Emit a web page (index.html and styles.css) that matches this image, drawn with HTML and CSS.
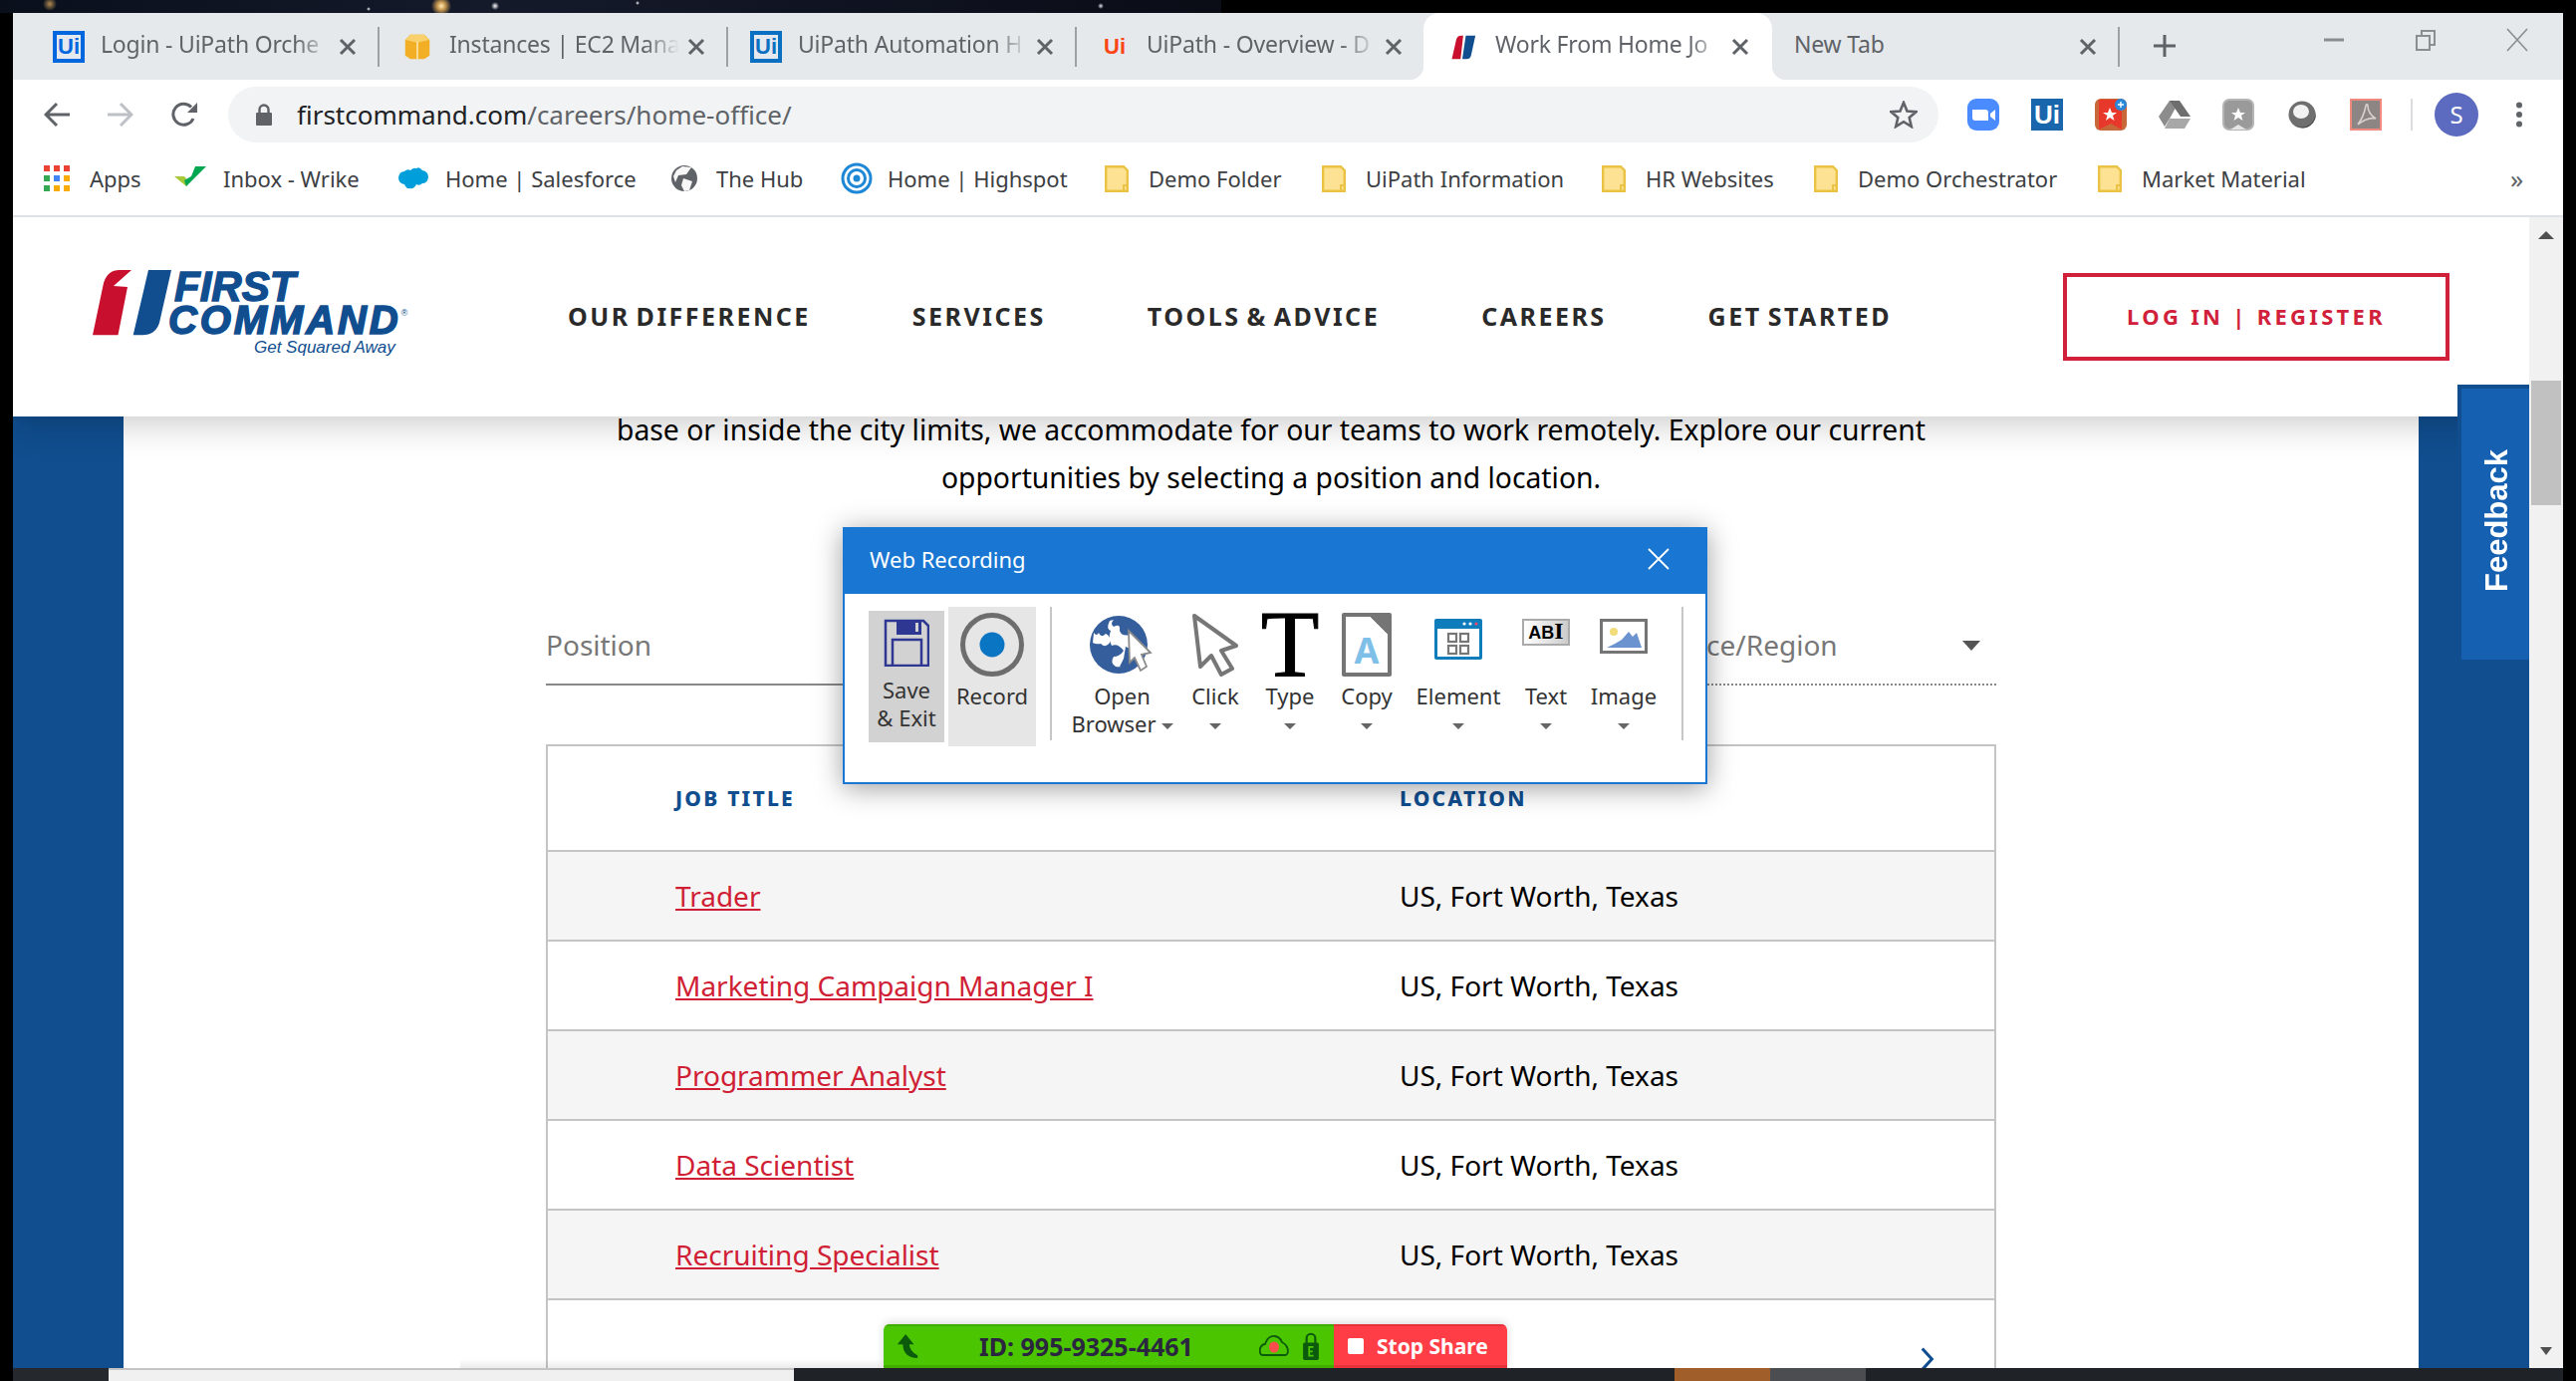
FILE: index.html
```html
<!DOCTYPE html>
<html lang="en">
<head>
    <meta charset="UTF-8">
    <title>Work From Home Jobs | First Command</title>
    <link rel="stylesheet" href="styles.css">
</head>
<body>
<div class="wallpaper"></div>
<div class="window">

    <!-- Tab strip -->
    <div class="tabstrip">
        <div class="tab">
            <span class="fav-ui">Ui</span>
            <span class="tab-title">Login - UiPath Orche</span>
            <svg class="tab-x" viewBox="0 0 18 18"><path d="M2 2 16 16M16 2 2 16"/></svg>
        </div>
        <div class="tab-sep"></div>
        <div class="tab">
            <svg class="fav" viewBox="0 0 32 32"><path fill="#f2ae25" d="M2 8 8 2H24L30 8V26L24 30H8L2 26Z"/><path fill="#f8d06c" d="M8 2H24L30 8 16 11 2 8Z"/><path fill="#fbe3a5" d="M15 10H17V30H15Z"/></svg>
            <span class="tab-title">Instances | EC2 Mana</span>
            <svg class="tab-x" viewBox="0 0 18 18"><path d="M2 2 16 16M16 2 2 16"/></svg>
        </div>
        <div class="tab-sep"></div>
        <div class="tab">
            <span class="fav-ui fav-ui-dark">Ui</span>
            <span class="tab-title">UiPath Automation H</span>
            <svg class="tab-x" viewBox="0 0 18 18"><path d="M2 2 16 16M16 2 2 16"/></svg>
        </div>
        <div class="tab-sep"></div>
        <div class="tab">
            <span class="fav-ui-red">Ui</span>
            <span class="tab-title">UiPath - Overview - D</span>
            <svg class="tab-x" viewBox="0 0 18 18"><path d="M2 2 16 16M16 2 2 16"/></svg>
        </div>
        <div class="tab tab-active">
            <svg class="fav fav-fc" viewBox="0 0 32 32"><path fill="#c8102e" d="M4 30 9 8Q10 3 15 3H17L14 30Z"/><path fill="#104e8f" d="M20 3H31L26 26Q25 30 21 30H16Z"/></svg>
            <span class="tab-title">Work From Home Jo</span>
            <svg class="tab-x" viewBox="0 0 18 18"><path d="M2 2 16 16M16 2 2 16"/></svg>
        </div>
        <div class="tab tab-new">
            <span class="tab-title tab-title-full">New Tab</span>
            <svg class="tab-x" viewBox="0 0 18 18"><path d="M2 2 16 16M16 2 2 16"/></svg>
        </div>
        <div class="tab-sep"></div>
        <svg class="tab-plus" viewBox="0 0 24 24"><path d="M12 1V23M1 12H23"/></svg>
        <div class="win-controls">
            <svg viewBox="0 0 24 24"><path stroke="#8a8d91" stroke-width="3" d="M2 12H22"/></svg>
            <svg viewBox="0 0 24 24"><path fill="none" stroke="#8a8d91" stroke-width="2" d="M3 8H16V22H3ZM8 8V3H21V17H16"/></svg>
            <svg viewBox="0 0 24 24"><path stroke="#8a8d91" stroke-width="1.6" d="M2 1 22 23M22 1 2 23"/></svg>
        </div>
    </div>

    <!-- Address bar -->
    <div class="toolbar">
        <svg class="nav-btn" viewBox="0 0 26 26"><path fill="none" stroke="#5f6368" stroke-width="3" d="M26 13H2M13 2 2 13 13 24"/></svg>
        <svg class="nav-btn" viewBox="0 0 26 26"><path fill="none" stroke="#bdc1c6" stroke-width="3" d="M0 13H24M13 2 24 13 13 24"/></svg>
        <svg class="nav-btn nav-reload" viewBox="0 0 26 26"><path fill="none" stroke="#5f6368" stroke-width="3" d="M22 17A10.5 10.5 0 1 1 20 5.5"/><path fill="#5f6368" d="M26 1V11H16Z"/></svg>
        <div class="omnibox">
            <svg class="lock" viewBox="0 0 16 22"><path fill="#5f6368" d="M1 9H15Q16 9 16 10V21Q16 22 15 22H1Q0 22 0 21V10Q0 9 1 9Z"/><path fill="none" stroke="#5f6368" stroke-width="2.4" d="M3.5 10V6A4.5 4.5 0 0 1 12.5 6V10"/></svg>
            <span class="url"><b>firstcommand.com</b>/careers/home-office/</span>
            <svg class="star" viewBox="0 0 28 28"><path fill="none" stroke="#5f6368" stroke-width="2.6" d="M14 2 17.5 10.5 26.5 11.2 19.7 17 21.8 26 14 21.2 6.2 26 8.3 17 1.5 11.2 10.5 10.5Z"/></svg>
        </div>
        <div class="extensions">
            <svg viewBox="0 0 32 32"><rect width="32" height="32" rx="9" fill="#4a8cff"/><path fill="#fff" d="M5 11H18Q21 11 21 14V22H8Q5 22 5 19ZM23 15 28 11V22L23 18Z"/></svg>
            <span class="ext-ui">Ui</span>
            <svg viewBox="0 0 32 32"><rect width="32" height="32" rx="6" fill="#c7673a"/><path fill="#e8382c" d="M4 1H27V31L16 25 4 31Z"/><path fill="#fff" d="M15 9 17 14H22L18 17 19.500 22 15 19 11 22 12.500 17 8 14H13Z"/><circle cx="26" cy="6" r="6" fill="#2b88d9"/><path stroke="#fff" stroke-width="1.4" d="M26 3V9M23 6H29"/></svg>
            <svg viewBox="0 0 32 32"><path fill="#8c8c8c" d="M11 2H21L11 20 6 28 0 18Z"/><path fill="#6e6e6e" d="M11 2H21L32 18H22Z"/><path fill="#a8a8a8" d="M6 30 11 20H32L26 30Z"/></svg>
            <svg viewBox="0 0 32 32"><rect x="1" y="1" width="30" height="30" rx="6" fill="#9a9a9a" stroke="#b5b5b5" stroke-width="2"/><path fill="#fff" d="M16 9 18 14H23L19 17 20.500 22 16 19 11.500 22 13 17 9 14H14Z"/><path fill="#e5e5e5" d="M8 31 16 26 24 31Z"/></svg>
            <svg viewBox="0 0 32 32"><circle cx="16" cy="16" r="13.500" fill="#6f6f6f"/><ellipse cx="15" cy="13" rx="8" ry="7" fill="#f2f2f2"/><path fill="#4a4a4a" d="M8 26A13.500 13.500 0 0 0 29 12 13 13 0 0 1 8 26Z"/></svg>
            <svg viewBox="0 0 32 32"><rect width="32" height="32" fill="#f08a7e"/><rect x="2" y="2" width="28" height="28" fill="#8d8583"/><path fill="none" stroke="#d8d0ce" stroke-width="1.600" d="M8 26Q14 18 16 7 17 4 18 7 18 15 26 20 18 18 8 26Z"/></svg>
        </div>
        <div class="toolbar-sep"></div>
        <div class="avatar">S</div>
        <svg class="menu-dots" viewBox="0 0 8 26"><circle cx="4" cy="3.500" r="3" fill="#5f6368"/><circle cx="4" cy="13" r="3" fill="#5f6368"/><circle cx="4" cy="22.500" r="3" fill="#5f6368"/></svg>
    </div>

    <!-- Bookmarks -->
    <div class="bookmarks">
        <div class="bm">
            <svg class="bm-apps" viewBox="0 0 26 26"><g fill="#ea4335"><rect width="6" height="6"/><rect x="10" width="6" height="6"/><rect x="20" width="6" height="6"/></g><rect y="10" width="6" height="6" fill="#34a853"/><rect x="10" y="10" width="6" height="6" fill="#4285f4"/><rect x="20" y="10" width="6" height="6" fill="#f9ab00"/><rect y="20" width="6" height="6" fill="#34a853"/><rect x="10" y="20" width="6" height="6" fill="#f9ab00"/><rect x="20" y="20" width="6" height="6" fill="#f9ab00"/></svg>
            <span>Apps</span>
        </div>
        <div class="bm">
            <svg class="bm-wide" viewBox="0 0 32 24"><path fill="#a8c93a" d="M0 10H10L15 16 12 20Z"/><path fill="#00a651" d="M12 20 10 14 17 10 21 0H32Z"/></svg>
            <span>Inbox - Wrike</span>
        </div>
        <div class="bm">
            <svg class="bm-sf" viewBox="0 0 30 22"><path fill="#009edb" d="M12 3Q15 0 18 1 21-1 24 3 30 4 30 10 29 16 24 16 21 19 18 17 16 22 11 21 8 22 6 17 0 16 0 10 1 4 6 4 9 1 12 3Z"/></svg>
            <span>Home | Salesforce</span>
        </div>
        <div class="bm">
            <svg class="bm-hub" viewBox="0 0 26 28"><circle cx="13" cy="14" r="13" fill="#5f6368"/><path fill="#fff" d="M11 2 20 3 15 10 7 11 4 18 2 12 5 6ZM12 14 21 17 18 26 13 27 10 21Z" opacity=".95"/></svg>
            <span>The Hub</span>
        </div>
        <div class="bm">
            <svg class="bm-hs" viewBox="0 0 32 32"><g fill="none" stroke="#1e88d6" stroke-width="3"><circle cx="16" cy="16" r="14"/><circle cx="16" cy="16" r="8.500"/></g><circle cx="16" cy="16" r="3.500" fill="#1e88d6"/></svg>
            <span>Home | Highspot</span>
        </div>
        <div class="bm">
            <svg class="bm-folder" viewBox="0 0 24 27"><use href="#folder"/></svg>
            <span>Demo Folder</span>
        </div>
        <div class="bm">
            <svg class="bm-folder" viewBox="0 0 24 27"><use href="#folder"/></svg>
            <span>UiPath Information</span>
        </div>
        <div class="bm">
            <svg class="bm-folder" viewBox="0 0 24 27"><use href="#folder"/></svg>
            <span>HR Websites</span>
        </div>
        <div class="bm">
            <svg class="bm-folder" viewBox="0 0 24 27"><use href="#folder"/></svg>
            <span>Demo Orchestrator</span>
        </div>
        <div class="bm">
            <svg class="bm-folder" viewBox="0 0 24 27"><use href="#folder"/></svg>
            <span>Market Material</span>
        </div>
        <div class="bm-more">»</div>
    </div>

    <svg class="defs"><defs><g id="folder"><path fill="#fde293" stroke="#eac244" stroke-width="2.400" d="M1.200 1.200H19L22.800 5V25.800H1.200Z"/><path fill="none" stroke="#eac244" stroke-width="2" d="M19 26V20H23"/></g></defs></svg>

    <!-- Page -->
    <div class="viewport">
        <div class="page">
            <header class="site-header">
                <div class="logo">
                    <svg class="logo-mark" viewBox="0 0 80 66"><path fill="#c8102e" d="M0 65.300 11 13Q15 0 27 0H39L21 16 35 17 25.500 65.300Z"/><path fill="#104e8f" d="M56 0H79L67 53Q63 65.300 50 65.300H40.700Z"/></svg>
                    <div class="logo-text">
                        <div class="logo-first">FIRST</div>
                        <div class="logo-command">COMMAND<sup>®</sup></div>
                        <div class="logo-tag">Get Squared Away</div>
                    </div>
                </div>
                <nav class="site-nav">
                    <a>OUR DIFFERENCE</a>
                    <a>SERVICES</a>
                    <a>TOOLS &amp; ADVICE</a>
                    <a>CAREERS</a>
                    <a>GET STARTED</a>
                </nav>
                <a class="login-btn">LOG IN | REGISTER</a>
            </header>

            <div class="main">
                <div class="side"></div>
                <div class="content">
                    <p class="intro">base or inside the city limits, we accommodate for our teams to work remotely. Explore our current<br>opportunities by selecting a position and location.</p>

                    <div class="filters">
                        <div class="select select-position">Position</div>
                        <div class="select select-region">Province/Region<i class="select-caret"></i></div>
                    </div>

                    <table class="jobs">
                        <tr class="head"><th>JOB TITLE</th><th>LOCATION</th></tr>
                        <tr><td><a>Trader</a></td><td>US, Fort Worth, Texas</td></tr>
                        <tr><td><a>Marketing Campaign Manager I</a></td><td>US, Fort Worth, Texas</td></tr>
                        <tr><td><a>Programmer Analyst</a></td><td>US, Fort Worth, Texas</td></tr>
                        <tr><td><a>Data Scientist</a></td><td>US, Fort Worth, Texas</td></tr>
                        <tr><td><a>Recruiting Specialist</a></td><td>US, Fort Worth, Texas</td></tr>
                        <tr class="pager"><td></td><td><svg viewBox="0 0 16 28"><path fill="none" stroke="#104e8f" stroke-width="3.500" d="M2 2 13 14 2 26"/></svg></td></tr>
                    </table>
                </div>
                <div class="side"></div>
            </div>

            <div class="feedback"><span>Feedback</span></div>

            <!-- Web Recording dialog -->
            <div class="recorder">
                <div class="rec-title">
                    <span>Web Recording</span>
                    <svg viewBox="0 0 22 22"><path stroke="#fff" stroke-width="1.800" d="M1 1 21 21M21 1 1 21"/></svg>
                </div>
                <div class="ribbon">
                    <div class="rb rb-save">
                        <svg class="ic-save" viewBox="0 0 46 48"><path fill="none" stroke="#2e3792" stroke-width="2.500" d="M2 2H40L45 7V47H2Z"/><path fill="#2e3792" d="M13 2H38V16H13Z"/><path fill="#d2d2d2" d="M32 4H35V13H32Z"/><path fill="none" stroke="#2e3792" stroke-width="2.500" d="M9 47V21H38V47"/></svg>
                        <div class="rb-label">Save<br>&amp; Exit</div>
                    </div>
                    <div class="rb rb-record">
                        <svg class="ic" viewBox="0 0 64 64"><circle cx="32" cy="32" r="29.500" fill="none" stroke="#6d6d6d" stroke-width="5"/><circle cx="32" cy="32" r="12.500" fill="#0a75c2"/></svg>
                        <div class="rb-label">Record</div>
                    </div>
                    <div class="rb-sep"></div>
                    <div class="rb rb-open">
                        <svg class="ic" viewBox="0 0 66 64"><circle cx="31" cy="32" r="29" fill="#355e9c"/><path fill="#fff" d="M6 20Q9 24 11 20 13 26 18 21 23 23 22 30 18 36 13 31 8 32 5 30ZM26 7Q22 11 26 14 33 10 32 18 34 24 42 22 40 30 46 34L50 46Q40 56 28 54 22 50 26 44 32 44 36 38 30 30 24 33 20 26 23 18 18 16 22 8 26 7ZM9 44Q14 40 20 46 22 50 19 52 13 50 9 44Z"/><path fill="#355e9c" d="M38 34 47 38 50 50 40 56 32 54 36 46Z"/><path fill="#fff" stroke="#8a8a8a" stroke-width="1.800" d="M41 18 63 40 54 42 59 54 53 58 47 45 42 50Z"/></svg>
                        <div class="rb-label">Open<br>Browser<i class="caret caret-inline"></i></div>
                    </div>
                    <div class="rb rb-click">
                        <svg class="ic" viewBox="0 0 48 64"><path fill="#fff" stroke="#777" stroke-width="4" stroke-linejoin="round" d="M3 3 45 33 30 38 41 56 30 62 20 43 9 54Z"/></svg>
                        <div class="rb-label">Click<br><i class="caret"></i></div>
                    </div>
                    <div class="rb rb-type">
                        <div class="ic-t">T</div>
                        <div class="rb-label">Type<br><i class="caret"></i></div>
                    </div>
                    <div class="rb rb-copy">
                        <div class="ic-doc"><span>A</span></div>
                        <div class="rb-label">Copy<br><i class="caret"></i></div>
                    </div>
                    <div class="rb rb-element">
                        <svg class="ic-small" viewBox="0 0 48 41"><rect width="48" height="41" rx="2" fill="#0f7dbc"/><rect x="3" y="10" width="42" height="28" fill="#fff"/><circle cx="30" cy="5" r="1.600" fill="#fff"/><circle cx="36" cy="5" r="1.600" fill="#fff"/><circle cx="42" cy="5" r="1.600" fill="#f0496a"/><g fill="none" stroke="#777" stroke-width="2.200"><rect x="14" y="15" width="8" height="8"/><rect x="26" y="15" width="8" height="8"/><rect x="14" y="27" width="8" height="8"/><rect x="26" y="27" width="8" height="8"/></g></svg>
                        <div class="rb-label">Element<br><i class="caret"></i></div>
                    </div>
                    <div class="rb rb-text">
                        <div class="ic-abc">AB<b>I</b></div>
                        <div class="rb-label">Text<br><i class="caret"></i></div>
                    </div>
                    <div class="rb rb-image">
                        <svg class="ic-small" viewBox="0 0 48 35"><rect x="1.500" y="1.500" width="45" height="32" fill="#fff" stroke="#757575" stroke-width="3"/><circle cx="14" cy="13" r="4" fill="#f2dc7a"/><path fill="#6a93cf" d="M7 29Q16 25 22 21L29 13 33 18 37 14 42 29Z"/></svg>
                        <div class="rb-label">Image<br><i class="caret"></i></div>
                    </div>
                    <div class="rb-sep rb-sep-end"></div>
                </div>
            </div>

            <!-- Zoom share bar -->
            <div class="share-shadow"></div>
            <div class="sharebar">
                <div class="share-id">
                    <svg class="share-arrow" viewBox="0 0 22 26"><path fill="#0c5a0c" d="M9 0 18 11H13Q13 18 22 23V26Q6 25 6 11H0Z"/></svg>
                    <span>ID: 995-9325-4461</span>
                    <svg class="share-cloud" viewBox="0 0 30 24"><path fill="none" stroke="#0c5a0c" stroke-width="1.800" d="M3 21Q0 20 1 14 3 10 6 10 9 1 16 2 21 3 23 8 29 11 29 18 28 21 26 21Z"/><ellipse cx="15" cy="13" rx="5" ry="5.500" fill="#ff4d4d"/></svg>
                    <svg class="share-lock" viewBox="0 0 18 32"><path fill="none" stroke="#0c5a0c" stroke-width="2.500" d="M4 14V7A5 5 0 0 1 14 7V14"/><rect y="12" width="18" height="20" rx="2" fill="#0c5a0c"/><path stroke="#4bc500" stroke-width="2" fill="none" d="M12 17H7V27H12M7 22H11"/></svg>
                </div>
                <div class="share-stop"><i></i>Stop Share</div>
            </div>
        </div>
        <div class="scrollbar">
            <i class="scroll-up"></i>
            <div class="scroll-thumb"></div>
            <i class="scroll-down"></i>
        </div>
    </div>

    <!-- Windows taskbar, mostly cut off -->
    <div class="taskbar">
        <div class="tb-start"></div>
        <div class="tb-light"></div>
        <div class="tb-dark"></div>
        <div class="tb-orange"></div>
        <div class="tb-gray"></div>
    </div>
</div>
</body>
</html>
```

FILE: styles.css
```css
* {
    box-sizing: border-box;
}

html, body {
    margin: 0;
    height: 100%;
    overflow: hidden;
    background-color: #000;
}

body {
    width: 2586px;
    height: 1386px;
    font-family: "Noto Sans", "Open Sans", sans-serif;
}

svg {
    display: block;
    flex: none;
}

.wallpaper {
    width: 1226px;
    height: 13px;
    background:
        radial-gradient(circle at 443px 6px, #ffe9b8 0, #c89a50 4px, transparent 10px),
        radial-gradient(circle at 497px 6px, #fff 0, transparent 4px),
        radial-gradient(circle at 50px 4px, #b08a50 0, transparent 7px),
        radial-gradient(circle at 640px 3px, #fff 0, transparent 2px),
        radial-gradient(circle at 1105px 6px, #dfe6f0 0, transparent 3px),
        radial-gradient(circle at 370px 9px, #fff 0, transparent 2px),
        linear-gradient(90deg, #0a0f1c, #151a2b 40%, #0a0c16);
}

.window {
    width: 2560px;
    height: 1373px;
    margin-left: 13px;
    display: flex;
    flex-direction: column;
    background-color: #fff;
}

/* Tab strip */
.tabstrip {
    height: 67px;
    flex: none;
    display: flex;
    align-items: center;
    padding-left: 18px;
    background-color: #e6e9ec;
}

.tab {
    width: 348px;
    height: 67px;
    flex: none;
    display: flex;
    align-items: center;
    padding: 0 21px 0 22px;
    position: relative;
}

.tab-active {
    width: 350px;
    margin-left: 0;
    background-color: #fff;
    border-radius: 16px 16px 0 0;
    padding-right: 23px;
}

.tab-active::before,
.tab-active::after {
    content: "";
    position: absolute;
    bottom: 0;
    width: 14px;
    height: 14px;
}

.tab-active::before {
    left: -14px;
    background: radial-gradient(circle at 0 0, #e6e9ec 14px, #fff 14.5px);
}

.tab-active::after {
    right: -14px;
    background: radial-gradient(circle at 100% 0, #e6e9ec 14px, #fff 14.5px);
}

.tab-new {
    width: 347px;
    padding-left: 22px;
}

.tab-sep {
    width: 2px;
    height: 40px;
    flex: none;
    background-color: #9da1a6;
}

.fav {
    width: 28px;
    height: 28px;
    margin: 0 18px 0 2px;
}

.fav-fc {
    margin: 0 19px 0 3px;
}

.fav-ui {
    width: 32px;
    height: 32px;
    flex: none;
    margin-right: 16px;
    border: 4px solid #0067df;
    background-color: #e4e9f0;
    color: #0067df;
    font: bold 22px/24px "Liberation Sans", sans-serif;
    text-align: center;
}

.fav-ui-dark {
    border-color: #0b6fc2;
    color: #0b6fc2;
}

.fav-ui-red {
    width: 32px;
    flex: none;
    margin-right: 16px;
    color: #fa4616;
    font: bold 22px/32px "Liberation Sans", sans-serif;
    text-align: center;
}

.tab-title {
    flex: 1;
    min-width: 0;
    margin-top: -5px;
    overflow: hidden;
    white-space: nowrap;
    font-size: 23px;
    letter-spacing: -0.2px;
    color: #5f6368;
    -webkit-mask-image: linear-gradient(90deg, #000 85%, transparent);
    mask-image: linear-gradient(90deg, #000 85%, transparent);
}

.tab-title-full {
    -webkit-mask-image: none;
    mask-image: none;
}

.tab-x {
    width: 18px;
    height: 18px;
    margin-left: 8px;
    stroke: #5f6368;
    stroke-width: 3;
}

.tab-plus {
    width: 24px;
    height: 24px;
    margin-left: 33px;
    margin-top: -2px;
    stroke: #5f6368;
    stroke-width: 3;
}

.win-controls {
    display: flex;
    gap: 68px;
    margin-left: 146px;
    margin-top: -14px;
}

.win-controls svg {
    width: 24px;
    height: 24px;
}

/* Address bar */
.toolbar {
    height: 70px;
    flex: none;
    display: flex;
    align-items: center;
    padding-left: 31px;
}

.nav-btn {
    width: 26px;
    height: 26px;
    margin-right: 38px;
}

.nav-reload {
    margin-right: 31px;
}

.omnibox {
    width: 1717px;
    height: 56px;
    flex: none;
    display: flex;
    align-items: center;
    padding: 0 21px 0 28px;
    border-radius: 28px;
    background-color: #f1f3f4;
}

.lock {
    width: 16px;
    height: 22px;
    margin-right: 25px;
}

.url {
    font-size: 26px;
    color: #5f6368;
    white-space: nowrap;
}

.url b {
    font-weight: 400;
    color: #202124;
}

.star {
    width: 28px;
    height: 28px;
    margin-left: auto;
}

.extensions {
    display: flex;
    gap: 32px;
    margin-left: 29px;
}

.extensions svg {
    width: 32px;
    height: 32px;
}

.ext-ui {
    width: 32px;
    height: 32px;
    flex: none;
    background-color: #1a66ad;
    color: #fff;
    font: bold 26px/32px "Liberation Sans", sans-serif;
    text-align: center;
}

.toolbar-sep {
    width: 2px;
    height: 32px;
    margin-left: 29px;
    background-color: #dadce0;
}

.avatar {
    width: 44px;
    height: 44px;
    margin-left: 22px;
    flex: none;
    border-radius: 50%;
    background-color: #5c6bc0;
    color: #fff;
    font-size: 24px;
    line-height: 44px;
    text-align: center;
}

.menu-dots {
    width: 8px;
    height: 26px;
    margin-left: 37px;
}

/* Bookmarks */
.bookmarks {
    height: 68px;
    flex: none;
    display: grid;
    grid-template-columns: 131px 225px 274px 169px 266px 218px 281px 213px 285px 414px 1fr;
    padding: 0 0 8px 31px;
    border-bottom: 2px solid #dee1e6;
}

.bm {
    display: flex;
    align-items: center;
    white-space: nowrap;
    font-size: 22px;
    color: #3c4043;
}

.bm-apps {
    width: 26px;
    height: 26px;
    margin-right: 20px;
}

.bm-wide {
    width: 32px;
    height: 24px;
    margin-right: 17px;
}

.bm-sf {
    width: 30px;
    height: 22px;
    margin-right: 17px;
}

.bm-hub {
    width: 26px;
    height: 28px;
    margin-right: 19px;
}

.bm-hs {
    width: 34px;
    height: 32px;
    margin-right: 14px;
}

.bm-folder {
    width: 24px;
    height: 27px;
    margin-right: 20px;
}

.bm-more {
    font-size: 26px;
    line-height: 58px;
    color: #5f6368;
}

.defs {
    width: 0;
    height: 0;
    position: absolute;
}

/* Page */
.viewport {
    flex: 1;
    min-height: 0;
    display: flex;
}

.page {
    flex: 1;
    min-width: 0;
    position: relative;
    overflow: hidden;
    display: flex;
    flex-direction: column;
}

.site-header {
    height: 200px;
    flex: none;
    display: flex;
    align-items: center;
    padding: 0 80px;
    position: relative;
    z-index: 2;
    background-color: #fff;
    box-shadow: 0 6px 36px rgba(0, 0, 0, 0.22);
}

.logo {
    width: 477px;
    flex: none;
    display: flex;
    margin-top: -8px;
}

.logo-mark {
    width: 80px;
    height: 66px;
    margin-top: 2px;
}

.logo-text {
    margin-left: -4px;
    color: #104e8f;
    font-family: "Liberation Sans", sans-serif;
    font-style: italic;
    font-weight: 700;
    white-space: nowrap;
}

.logo-first {
    margin-left: 6px;
    font-size: 42px;
    line-height: 37px;
    -webkit-text-stroke: 1.4px #104e8f;
}

.logo-command {
    font-size: 40px;
    line-height: 31px;
    letter-spacing: 2.9px;
    -webkit-text-stroke: 1.6px #104e8f;
}

.logo-command sup {
    font-size: 9px;
    font-weight: 400;
    letter-spacing: 0;
    -webkit-text-stroke: 0;
    vertical-align: 18px;
    line-height: 0;
}

.logo-tag {
    margin: 2px 0 0 86px;
    font-size: 17px;
    line-height: 20px;
    font-weight: 400;
}

.site-nav {
    display: flex;
    gap: 102px;
    margin-top: -2px;
}

.site-nav a {
    font-size: 25px;
    font-weight: 700;
    letter-spacing: 2.5px;
    word-spacing: -3px;
    color: #2a2a2a;
    white-space: nowrap;
}

.login-btn {
    width: 388px;
    height: 88px;
    margin-left: auto;
    flex: none;
    border: 4px solid #d1213a;
    color: #d1213a;
    font-size: 22px;
    font-weight: 700;
    letter-spacing: 3.3px;
    line-height: 78px;
    text-align: center;
    white-space: nowrap;
}

.main {
    flex: 1;
    min-height: 0;
    display: flex;
}

.side {
    width: 111px;
    flex: none;
    background-color: #104e8f;
}

.content {
    flex: 1;
    min-width: 0;
    background-color: #fff;
    padding: 0 424px;
}

.intro {
    margin: -10px -300px 0;
    font-size: 28.300px;
    line-height: 47.500px;
    color: #000;
    text-align: center;
}

.filters {
    height: 244px;
    display: flex;
    gap: 354px;
    padding-top: 124px;
}

.select {
    height: 61px;
    font-size: 28px;
    line-height: 40px;
    color: #777;
    white-space: nowrap;
    position: relative;
}

.select-position {
    flex: 1;
    border-bottom: 2px solid #888;
}

.select-region {
    width: 374px;
    border-bottom: 2px dotted #888;
}

.select-caret {
    position: absolute;
    right: 16px;
    top: 16px;
    border-top: 10px solid #555;
    border-left: 9px solid transparent;
    border-right: 9px solid transparent;
}

.jobs {
    width: 100%;
    table-layout: fixed;
    border-collapse: collapse;
    border: 2px solid #c4c4c4;
}

.jobs th,
.jobs td {
    padding: 0;
    text-align: left;
    white-space: nowrap;
    border-top: 2px solid #c4c4c4;
    height: 90px;
    font-size: 28px;
    color: #000;
}

.jobs th:first-child,
.jobs td:first-child {
    width: 856px;
    padding-left: 128px;
}

.jobs .head th {
    height: 106px;
    border-top: 0;
    font-size: 21px;
    font-weight: 800;
    letter-spacing: 2.2px;
    color: #104e8f;
}

.jobs tr:nth-child(even) td {
    background-color: #f5f5f5;
}

.jobs a {
    color: #d01f35;
    text-decoration: underline;
}

.jobs .pager td {
    height: 110px;
    vertical-align: top;
}

.jobs .pager svg {
    width: 14px;
    height: 26px;
    margin: 46px 0 0 523px;
}

/* Feedback tab */
.feedback {
    position: absolute;
    right: 0;
    top: 168px;
    z-index: 3;
    width: 72px;
    height: 276px;
    display: flex;
    align-items: center;
    justify-content: center;
    padding: 0 0 6px 4px;
    border-top: 4px solid #104e8f;
    border-left: 4px solid #104e8f;
    background-color: #1560b0;
}

.feedback span {
    writing-mode: vertical-rl;
    transform: rotate(180deg);
    font: bold 31px "Liberation Sans", sans-serif;
    color: #fff;
}

/* Web Recording dialog */
.recorder {
    position: absolute;
    left: 833px;
    top: 311px;
    z-index: 4;
    width: 868px;
    height: 258px;
    border: 2px solid #1976d2;
    background-color: #fff;
    box-shadow: 0 4px 26px rgba(0, 0, 0, 0.38);
}

.rec-title {
    height: 65px;
    display: flex;
    align-items: center;
    justify-content: space-between;
    padding: 0 36px 6px 25px;
    background-color: #1976d2;
    color: #fff;
    font-size: 22px;
}

.rec-title svg {
    width: 22px;
    height: 22px;
}

.ribbon {
    display: flex;
    align-items: flex-start;
    padding: 13px 0 0 24px;
    font-size: 22px;
    color: #333;
}

.rb {
    display: flex;
    flex-direction: column;
    align-items: center;
    height: 134px;
    flex: none;
    padding-top: 6px;
}

.rb-label {
    margin-top: 5px;
    font-size: 22px;
    line-height: 28px;
    text-align: center;
    white-space: nowrap;
}

.rb-save {
    width: 76px;
    height: 132px;
    margin-top: 4px;
    padding-top: 8px;
    background-color: #d2d2d2;
}

.rb-save .rb-label {
    margin-top: 9px;
}

.ic-save {
    width: 46px;
    height: 48px;
}

.rb-record {
    width: 88px;
    height: 140px;
    margin-left: 4px;
    background-color: #e6e6e6;
}

.ic {
    width: auto;
    height: 64px;
}

.rb-sep {
    width: 2px;
    height: 134px;
    flex: none;
    margin-left: 14px;
    background-color: #c6c6c6;
}

.rb-sep-end {
    margin-left: 23px;
}

.rb-open {
    width: 100px;
    margin-left: 19px;
}

.rb-open .rb-label {
    padding-left: 3px;
}

.rb-click {
    width: 90px;
}

.rb-type {
    width: 60px;
}

.rb-copy {
    width: 94px;
}

.rb-element {
    width: 90px;
}

.rb-text {
    width: 86px;
}

.rb-image {
    width: 70px;
}

.ic-t {
    height: 64px;
    font: 96px/64px "Liberation Serif", serif;
    color: #000;
    -webkit-text-stroke: 1px #000;
}

.ic-doc {
    width: 50px;
    height: 64px;
    border: 4px solid #757575;
    border-radius: 2px;
    background: linear-gradient(225deg, #757575 12px, #fff 12.500px);
    color: #7fc0e8;
    font-size: 36px;
    font-weight: 700;
    line-height: 52px;
    padding-top: 8px;
    text-align: center;
}

.ic-small {
    width: 48px;
    height: auto;
    margin: 6px 0 23px;
}

.rb-element .ic-small {
    margin-bottom: 17px;
}

.rb-image .ic-small {
    margin-bottom: 23px;
}

.ic-abc {
    width: 48px;
    height: 27px;
    margin: 6px 0 31px;
    border: 2px solid #aaa;
    background: linear-gradient(90deg, #fff, #ccc);
    color: #000;
    font: bold 18px/23px "Liberation Sans", sans-serif;
    white-space: nowrap;
    text-align: center;
}

.ic-abc b {
    font-family: "Liberation Serif", serif;
    font-size: 24px;
    line-height: 20px;
}

.caret {
    display: inline-block;
    vertical-align: middle;
    border-top: 6px solid #666;
    border-left: 6px solid transparent;
    border-right: 6px solid transparent;
}

.caret-inline {
    margin-left: 5px;
}

/* Zoom share bar */
.share-shadow {
    position: absolute;
    left: 449px;
    bottom: 0;
    width: 425px;
    height: 9px;
    z-index: 3;
    background: linear-gradient(rgba(0, 0, 0, 0), rgba(0, 0, 0, 0.08));
}

.sharebar {
    position: absolute;
    left: 874px;
    bottom: 0;
    z-index: 5;
    width: 626px;
    height: 44px;
    display: flex;
    border-radius: 6px 6px 0 0;
    overflow: hidden;
    box-shadow: 0 -2px 8px rgba(0, 0, 0, 0.15);
}

.share-id {
    flex: 1;
    display: flex;
    align-items: center;
    padding-left: 13px;
    border-top: 2px solid #42ad00;
    border-bottom: 3px solid #42ad00;
    background-color: #4bc500;
    color: #2a2640;
    font-size: 25px;
    font-weight: 700;
    white-space: nowrap;
}

.share-arrow {
    width: 22px;
    height: 24px;
    margin-right: 61px;
}

.share-cloud {
    width: 30px;
    height: 24px;
    margin-left: 66px;
}

.share-lock {
    width: 18px;
    height: 28px;
    margin-left: 13px;
}

.share-stop {
    width: 174px;
    flex: none;
    display: flex;
    align-items: center;
    padding-left: 14px;
    border-top: 2px solid #e8323a;
    border-bottom: 3px solid #e8323a;
    background-color: #ff3d46;
    color: #fff;
    font-size: 21px;
    font-weight: 700;
    white-space: nowrap;
}

.share-stop i {
    width: 16px;
    height: 16px;
    margin-right: 13px;
    border-radius: 2px;
    background-color: #fff;
}

/* Scrollbar */
.scrollbar {
    width: 34px;
    flex: none;
    padding: 14px 2px 0;
    background-color: #f1f1f1;
    display: flex;
    flex-direction: column;
    align-items: center;
    position: relative;
}

.scroll-up {
    border-bottom: 8px solid #505050;
    border-left: 8px solid transparent;
    border-right: 8px solid transparent;
}

.scroll-thumb {
    width: 30px;
    height: 125px;
    margin-top: 142px;
    background-color: #c1c1c1;
}

.scroll-down {
    position: absolute;
    bottom: 13px;
    border-top: 8px solid #505050;
    border-left: 6px solid transparent;
    border-right: 6px solid transparent;
}

/* Taskbar */
.taskbar {
    height: 13px;
    flex: none;
    display: flex;
    background-color: #1f2226;
}

.tb-start {
    width: 96px;
    background-color: #25282c;
}

.tb-light {
    width: 688px;
    border-top: 2px solid #c4c4c4;
    background-color: #f0f0f0;
}

.tb-dark {
    width: 884px;
}

.tb-orange {
    width: 96px;
    background-color: #a05f2a;
}

.tb-gray {
    width: 96px;
    background-color: #4b4d50;
}
```
